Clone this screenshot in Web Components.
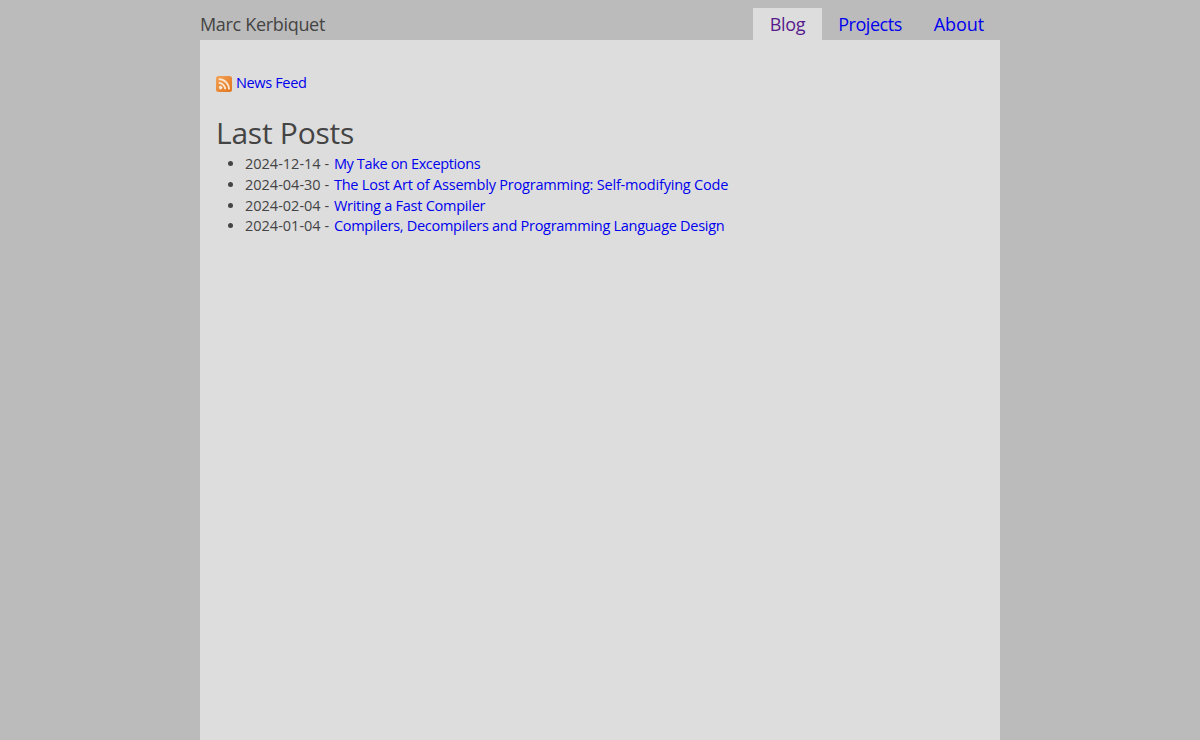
<!DOCTYPE html>
<html>
<head>
<meta charset="utf-8">
<title>Marc Kerbiquet</title>
<style>
    html, body { margin: 0; height: 100%; }
    body {
        background: #bbb;
        color: #444;
        font-family: "Open Sans", "Noto Sans", sans-serif;
        overflow: hidden;
    }
</style>
</head>
<body>
<site-page>
    <site-header slot="header">
        <nav-tab href="#" active style="--ls: -0.35px">Blog</nav-tab>
        <nav-tab href="#" style="--ls: -0.45px">Projects</nav-tab>
        <nav-tab href="#" style="--ls: -0.1px">About</nav-tab>
    </site-header>
    <feed-link>News Feed</feed-link>
    <post-list heading="Last Posts">
        <post-item date="2024-12-14" style="--ls: -0.36px">My Take on Exceptions</post-item>
        <post-item date="2024-04-30" style="--ls: -0.2px">The Lost Art of Assembly Programming: Self-modifying Code</post-item>
        <post-item date="2024-02-04" style="--ls: -0.25px">Writing a Fast Compiler</post-item>
        <post-item date="2024-01-04" style="--ls: -0.28px">Compilers, Decompilers and Programming Language Design</post-item>
    </post-list>
</site-page>

<script>
class SitePage extends HTMLElement {
    constructor() {
        super();
        this.attachShadow({ mode: 'open' });
        this.shadowRoot.innerHTML = `
            <style>
                :host { display: block; width: 800px; height: 740px; margin: 0 auto; }
                main { background: #ddd; height: 700px; padding: 31px 16px 0; box-sizing: border-box; }
            </style>
            <slot name="header"></slot>
            <main><slot></slot></main>
        `;
    }
}
customElements.define('site-page', SitePage);

class SiteHeader extends HTMLElement {
    constructor() {
        super();
        this.attachShadow({ mode: 'open' });
        this.shadowRoot.innerHTML = `
            <style>
                :host { display: flex; height: 40px; justify-content: space-between; align-items: flex-end; }
                .title { font-size: 18px; line-height: 32px; letter-spacing: -0.32px; }
                nav { display: flex; }
            </style>
            <div class="title">Marc Kerbiquet</div>
            <nav><slot></slot></nav>
        `;
    }
}
customElements.define('site-header', SiteHeader);

class NavTab extends HTMLElement {
    constructor() {
        super();
        this.attachShadow({ mode: 'open' });
        this.shadowRoot.innerHTML = `
            <style>
                :host { display: block; font-size: 18px; line-height: 32px; padding: 0 16px; letter-spacing: var(--ls, 0); }
                :host([active]) { background: #ddd; padding: 0 17px; }
                a { color: #00e; text-decoration: none; }
                :host([active]) a { color: #551a8b; }
            </style>
            <a><slot></slot></a>
        `;
        this.shadowRoot.querySelector('a').href = this.getAttribute('href') || '#';
    }
}
customElements.define('nav-tab', NavTab);

class FeedLink extends HTMLElement {
    constructor() {
        super();
        this.attachShadow({ mode: 'open' });
        this.shadowRoot.innerHTML = `
            <style>
                :host { display: flex; align-items: center; gap: 4px; height: 22px; font-size: 14.5px; }
                a { color: #00e; text-decoration: none; letter-spacing: -0.35px; }
                svg { display: block; margin-top: 3px; }
            </style>
            <svg width="16" height="16" viewBox="0 0 16 16">
                <defs>
                    <linearGradient id="g" x1="0" y1="0" x2="1" y2="1">
                        <stop offset="0" stop-color="#f2a45a"/>
                        <stop offset="1" stop-color="#e2741c"/>
                    </linearGradient>
                </defs>
                <rect x="0" y="0" width="16" height="16" rx="2.5" fill="url(#g)"/>
                <circle cx="4.6" cy="11.6" r="1.8" fill="#fbe6d0"/>
                <path d="M2.8 6.9a6.4 6.4 0 0 1 6.4 6.4" fill="none" stroke="#fbe6d0" stroke-width="1.8"/>
                <path d="M2.8 3.2a10.2 10.2 0 0 1 10.2 10.2" fill="none" stroke="#fbe6d0" stroke-width="1.8"/>
            </svg>
            <a href="#"><slot></slot></a>
        `;
    }
}
customElements.define('feed-link', FeedLink);

class PostList extends HTMLElement {
    constructor() {
        super();
        this.attachShadow({ mode: 'open' });
        this.shadowRoot.innerHTML = `
            <style>
                :host { display: block; margin-top: 20px; }
                h1 { font-size: 30px; font-weight: 400; line-height: 39px; margin: 0 0 2.25px; letter-spacing: -0.25px; }
                ul { margin: 0; padding: 0 0 0 29px; }
            </style>
            <h1></h1>
            <ul><slot></slot></ul>
        `;
        this.shadowRoot.querySelector('h1').textContent = this.getAttribute('heading');
    }
}
customElements.define('post-list', PostList);

class PostItem extends HTMLElement {
    constructor() {
        super();
        this.attachShadow({ mode: 'open' });
        this.shadowRoot.innerHTML = `
            <style>
                :host { display: list-item; font-size: 14.5px; line-height: 20.7px; }
                a { color: #00e; text-decoration: none; letter-spacing: var(--ls, -0.2px); margin-left: 1px; }
            </style>
            <span class="date"></span> - <a href="#"><slot></slot></a>
        `;
        this.shadowRoot.querySelector('.date').textContent = this.getAttribute('date');
    }
}
customElements.define('post-item', PostItem);
</script>
</body>
</html>
